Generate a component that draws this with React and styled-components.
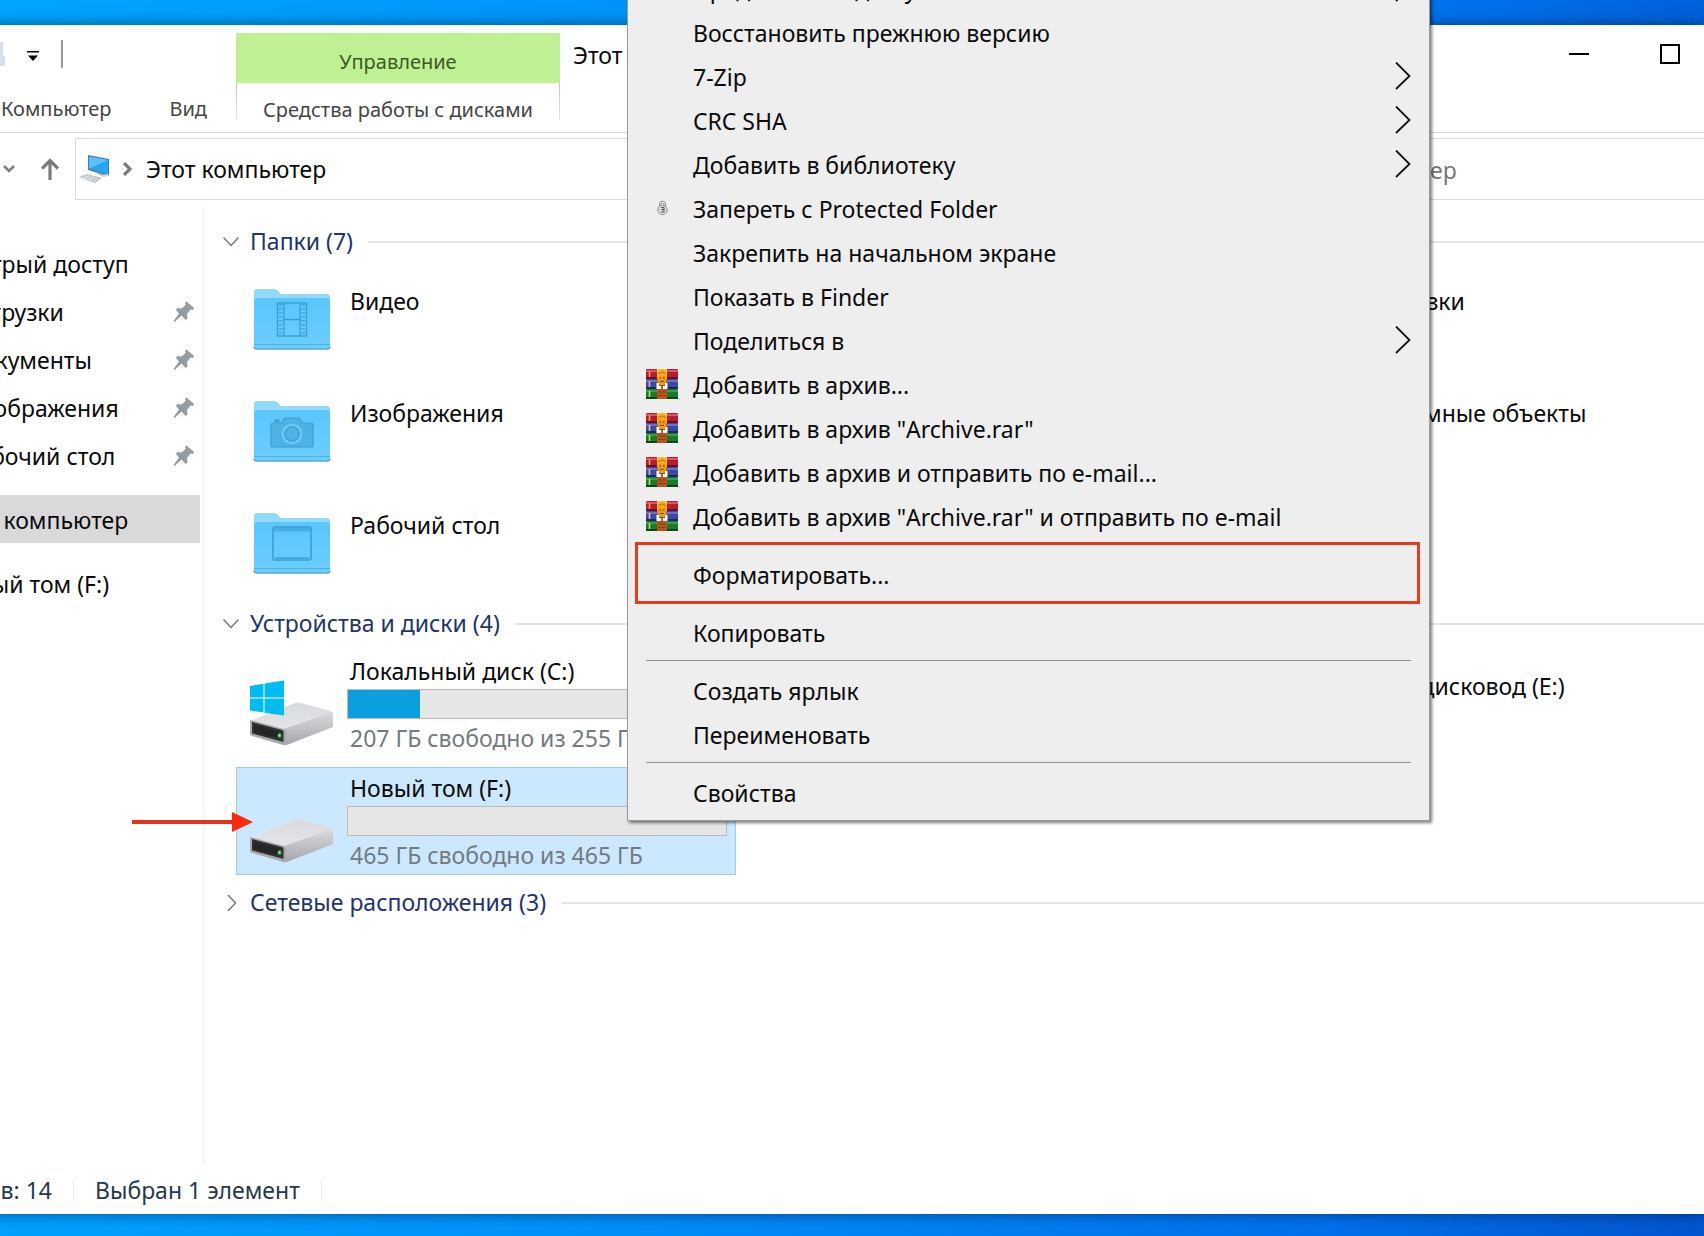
import React from "react";
import styled, { createGlobalStyle, css } from "styled-components";

const GlobalStyle = createGlobalStyle`
  *, *::before, *::after { box-sizing: border-box; }
  body { margin: 0; overflow: hidden; }
  body, button, input { font-family: "Noto Sans", "Open Sans", sans-serif; font-size: 23px; line-height: 30px; color: #0a0a0a; }
  button { margin: 0; padding: 0; border: 0; background: none; text-align: left; }
  a { color: inherit; text-decoration: none; }
  svg { display: block; flex: none; }
  h1, h2, ul { margin: 0; padding: 0; font-size: inherit; font-weight: 400; list-style: none; }
`;

/* ---------- shell ---------- */

const Desktop = styled.div`
  position: relative;
  display: flex;
  min-height: 100vh;
  padding: 25px 0 22px;
  overflow: hidden;
  background: linear-gradient(97deg, #00a6ff 0%, #0092fb 38%, #0070ea 80%, #0056d0 100%);
`;

const Window = styled.div`
  flex: 1;
  min-width: 0;
  display: flex;
  flex-direction: column;
  margin-left: -120px;
  background: #fff;
  box-shadow: 0 0 14px rgba(0, 20, 50, 0.55);
`;

/* ---------- ribbon ---------- */

const Ribbon = styled.header`
  display: flex;
  height: 108px;
  border-bottom: 1px solid #d9d9d9;
`;

const RibbonLeft = styled.div`
  width: 356px;
  display: grid;
  grid-template-rows: 58px 49px;
`;

const QuickAccess = styled.div`
  display: flex;
  align-items: center;
  justify-content: flex-end;
  gap: 22px;
  padding-right: 173px;
`;

const Divider = styled.span`
  width: ${(p) => (p.$faint ? 1 : 2)}px;
  height: ${(p) => (p.$faint ? 22 : 28)}px;
  background: ${(p) => (p.$faint ? "#e8eaec" : "#9a9a9a")};
`;

const Tabs = styled.nav`
  display: flex;
  justify-content: flex-end;
`;

const Tab = styled.button`
  padding: 2px 29px 0;
  font-size: 20px;
  color: #444;
`;

const ContextTab = styled.div`
  width: 324px;
  padding-top: 8px;
  display: grid;
  grid-template-rows: 50px 37px;
`;

const ContextTitle = styled.div`
  padding-top: 14px;
  font-size: 20px;
  text-align: center;
  color: #3d5a26;
  background: #c0f094;
`;

const ContextLabel = styled.button`
  padding-top: 12px;
  font-size: 20px;
  text-align: center;
  white-space: nowrap;
  color: #444;
  border: solid transparent;
  border-width: 0 1px;
  border-image: linear-gradient(#c4c4c4, #e6e6e6) 1;
`;

const Title = styled.h1`
  flex: 1;
  padding: 15px 13px;
`;

const Controls = styled.div`
  display: flex;
  gap: 23px;
`;

const ControlButton = styled.button`
  display: flex;
  align-items: center;
  justify-content: center;
  width: 68px;
  height: 58px;
`;

/* ---------- address row ---------- */

const AddressRow = styled.div`
  display: flex;
  padding: 5px 0 7px;
`;

const History = styled.div`
  width: 195px;
  display: flex;
  align-items: center;
  justify-content: flex-end;
  gap: 26px;
  padding-right: 16px;
`;

const AddressBox = styled.nav`
  flex: 1;
  height: 62px;
  display: flex;
  align-items: center;
  padding: 0 3px;
  border: 1px solid #d9d9d9;
`;

const Crumb = styled.a`
  padding: 0 14px;
`;

const SearchBox = styled.input`
  width: 536px;
  height: 62px;
  margin-left: 20px;
  padding: 2px 27px 0;
  border: solid #d9d9d9;
  border-width: 1px 0 1px 1px;
  outline: 0;
  &::placeholder { color: #767676; opacity: 1; }
`;

/* ---------- body ---------- */

const Body = styled.div`
  flex: 1;
  display: flex;
`;

const Sidebar = styled.nav`
  width: 324px;
  padding: 32px 3px 0 0;
  border-right: 1px solid #eee;
`;

const SideLink = styled.a`
  display: flex;
  align-items: center;
  justify-content: space-between;
  height: 48px;
  margin-bottom: ${(p) => (p.$spaced ? 16 : 0)}px;
  padding: 1px 5px 0 ${(p) => (p.$nested ? 85 : 68)}px;
  background: ${(p) => (p.$active ? "#d9d9d9" : "none")};
`;

const Pane = styled.main`
  flex: 1;
  min-width: 0;
  padding: 19px 0 0 19px;
`;

const GroupHeader = styled.button`
  width: 100%;
  height: 32px;
  display: flex;
  align-items: center;
  color: #22346b;
  white-space: nowrap;
  &::after {
    content: "";
    flex: 1;
    height: 2px;
    margin-left: 15px;
    background: #e3e4e6;
  }
`;

const GroupTitle = styled.h2`
  margin-left: 11px;
  padding-bottom: 2px;
`;

const Grid = styled.ul`
  display: grid;
  grid-template-columns: repeat(3, 500px);
  grid-auto-rows: ${(p) => (p.$drives ? 108 : 112)}px;
  gap: ${(p) => (p.$drives ? 9 : 0)}px 8px;
  padding: ${(p) => (p.$drives ? "10px 0 12px 13px" : "8px 0 6px 13px")};
`;

const Tile = styled.li`
  position: relative;
  grid-row: ${(p) => p.$row};
  grid-column: ${(p) => p.$col};
  display: flex;
  border: 1px solid transparent;
  ${(p) => p.$selected && css`
    background: #cce8ff;
    border-color: #a3cbe8;
  `}
`;

const IconCell = styled.div`
  width: 110px;
  padding: ${(p) => (p.$drive ? "28px 0 0 12px" : "20px 0 0 16px")};
`;

const TileText = styled.div`
  padding-top: ${(p) => (p.$top === "drive" ? 5 : p.$top === "single" ? 20 : 19)}px;
  white-space: nowrap;
`;

const Line = styled.div`
  padding-left: 3px;
  color: ${(p) => (p.$muted ? "#737a80" : "inherit")};
`;

const Usage = styled.div`
  width: 380px;
  height: 30px;
  margin: 3px 0 4px;
  background: #e6e6e6;
  border: 1px solid #bcbcbc;
`;

const UsageFill = styled.div`
  height: 100%;
  background: #0b9fe0;
`;

const Pointer = styled.svg`
  position: absolute;
  left: -105px;
  top: 43px;
`;

const StatusBar = styled.footer`
  display: flex;
  align-items: center;
  gap: 21px;
  height: 49px;
  color: #25384d;
`;

const StatusCount = styled.span`
  width: 172px;
  text-align: right;
`;

/* ---------- context menu ---------- */

const Menu = styled.div`
  position: absolute;
  left: 627px;
  top: -36px;
  width: 803px;
  padding: 2px 0 5px;
  background: #eee;
  border: 1px solid #999;
  box-shadow: 2px 2px 3px rgba(0, 0, 0, 0.5);
`;

const MenuItem = styled.button`
  position: relative;
  display: grid;
  grid-template-columns: 32px 1fr 16px;
  column-gap: 15px;
  align-items: center;
  width: 100%;
  height: 44px;
  padding: 0 18px;
  > svg { margin-bottom: 3px; }
  ${(p) => p.$marked && css`
    z-index: 1;
    &::after {
      content: "";
      position: absolute;
      inset: -11px 9px -7px 7px;
      border: 3px solid #e63c1e;
    }
  `}
`;

const IconSlot = styled.span`
  display: flex;
  justify-content: center;
  padding-bottom: 3px;
`;

const Separator = styled.hr`
  height: 1px;
  margin: 5px 18px 8px;
  border: 0;
  background: #8f8f8f;
`;

/* ---------- drawings ---------- */

const SubmenuArrow = () => (
  <svg width="16" height="28" viewBox="0 0 16 28" fill="none" stroke="#111" strokeWidth="1.8">
    <path d="M1 0.500l13.500 13.500L1 27" />
  </svg>
);

const Pin = () => (
  <svg width="22" height="22" viewBox="0 0 22 22" fill="#929da3">
    <path d="M13.500 0.500l7.500 6.500-1 2-2.500-.5-3.500 4.500.5 4.500-2 1.500-4-4.500L1.500 21 .5 20l5.500-7.500L3 9l1-2 4.500.5L12.500 4l-.5-2.500z" />
  </svg>
);

const Computer = () => (
  <svg width="31" height="28" viewBox="0 0 31 28">
    <path d="M9 0l21 4v17L9 15z" fill="#3f7fae" />
    <path d="M10 1.500l19 3.600v14.200L10 13.800z" fill="#27a4f4" />
    <path d="M10 1.500l19 3.600L10 13.800z" fill="#5dbffa" />
    <path d="M17 18l3-.5 8 2.500-2 2z" fill="#8aa0b2" />
    <path d="M0 22l8-3 15 4-7 5z" fill="#b9bfc6" />
    <path d="M3 22l14 4M6 20.800l13.500 3.800M5 23.500l5-3.500M10 25l5-4" stroke="#e9edf0" strokeWidth=".8" />
    <path d="M22 20.500l7-1.500 1 1.500-6 2z" fill="#d7dde2" />
  </svg>
);

const Folder = ({ kind }) => (
  <svg width="78" height="64" viewBox="0 0 78 64">
    <defs>
      <linearGradient id="folderFront" x1="0" y1="0" x2="0" y2="1">
        <stop offset="0" stopColor="#5ac6fa" />
        <stop offset="1" stopColor="#6ccdff" />
      </linearGradient>
    </defs>
    <path d="M1 5q0-3 3-3h17q2 0 4 2l3 3h46q3 0 3 3v10H1z" fill="#93d9f8" />
    <path d="M1 14q0-3 3-3h70q3 0 3 3v45q0 3-3 3H4q-3 0-3-3z" fill="url(#folderFront)" />
    <path d="M1 57.500h76" stroke="#52b4e6" />
    <path d="M1 59.500q0 2.500 3 2.500h70q3 0 3-2.500" fill="none" stroke="#5fa9d3" strokeWidth="1.500" />
    {kind === "video" && (
      <g fill="none" stroke="#369fd2" strokeWidth="1.300">
        <rect x="24.500" y="16" width="29" height="33" />
        <path d="M31 16v33M47 16v33M31 32.500h16" />
        <path d="M27.700 17v31M50.300 17v31" strokeWidth="4" strokeDasharray="1.500 2.500" opacity=".7" />
      </g>
    )}
    {kind === "image" && (
      <g fill="#4db2e4" stroke="#3a9fd2" strokeWidth="1.200">
        <path d="M20 24h9l3-5h14l3 5h9q2 0 2 2v20q0 2-2 2H20q-2 0-2-2V26q0-2 2-2z" />
        <rect x="22" y="21" width="4" height="1.500" />
        <circle cx="39" cy="35" r="9.500" fill="#58bdf0" stroke="#7fd2fb" />
        <circle cx="39" cy="35" r="7" />
        <circle cx="53" cy="28" r="1.500" fill="#8bd8fc" />
      </g>
    )}
    {kind === "desktop" && (
      <g fill="none" stroke="#3a9fd4" strokeWidth="1.600">
        <rect x="20" y="16" width="38" height="33" rx="2" />
        <path d="M20 18.500h38" strokeWidth="4" opacity=".6" />
        <path d="M22 47h34" />
      </g>
    )}
  </svg>
);

const Drive = ({ system }) => (
  <svg width="86" height="70" viewBox="0 0 86 70">
    <defs>
      <linearGradient id="driveTop" x1="0" y1="0" x2="0" y2="1">
        <stop offset="0" stopColor="#d9dadd" />
        <stop offset="1" stopColor="#e6e6e9" />
      </linearGradient>
      <linearGradient id="driveSide" x1="0" y1="0" x2="0" y2="1">
        <stop offset="0" stopColor="#dadbdd" />
        <stop offset="1" stopColor="#a4a6a9" />
      </linearGradient>
    </defs>
    <path d="M1 42L46 24q3-1 6 0l30 8 2 3L36 52z" fill="url(#driveTop)" />
    <path d="M35 50L84 33v15L39 65.500q-2 1-4 .5z" fill="url(#driveSide)" />
    <path d="M1 41l34 9q2 1 2 3v11q0 3-3 2L3 57q-2-.5-2-2z" fill="#a7a9ab" />
    <path d="M3 43l30 8q1.500.5 1.500 2V63L3 54.500z" fill="#303133" />
    <path d="M5 46l27 7v7L5 53z" fill="#242526" />
    <ellipse cx="30.500" cy="56.500" rx="2" ry="2.600" fill="#37a74a" />
    <circle cx="30.500" cy="56.500" r="1" fill="#b8f5c0" />
    {system && (
      <g fill="#00bcf2">
        <path d="M1 7l13.500-2.200V18.500H1zM15.500 4.600L35 1.500v17H15.500zM1 19.500h13.500v14L1 31.500zM15.500 19.500H35v17l-19.500-2.800z" />
      </g>
    )}
  </svg>
);

const Winrar = () => (
  <svg width="32" height="30" viewBox="0 0 32 30">
    <rect y="0" width="32" height="10" rx="1" fill="#b81c30" />
    <rect y="1" width="32" height="2" fill="#dc5262" />
    <rect y="8" width="32" height="2" fill="#6d0d1e" />
    <rect y="10" width="32" height="10" rx="1" fill="#3a4aa4" />
    <rect y="11" width="32" height="2" fill="#6474c6" />
    <rect y="18" width="32" height="2" fill="#1d2762" />
    <rect y="20" width="32" height="10" rx="1" fill="#187a2a" />
    <rect y="21" width="32" height="2" fill="#33a146" />
    <rect y="28" width="32" height="2" fill="#0c4617" />
    <path d="M3.500 2v6" stroke="#f2a33c" strokeWidth="1.600" />
    <path d="M3.500 12v6" stroke="#e6b9a0" strokeWidth="1.600" />
    <path d="M3.500 22v6" stroke="#c5e04a" strokeWidth="1.600" />
    <path d="M11 0h10v10H11z" fill="#f0cf45" />
    <path d="M11 10h10v10H11z" fill="#8a4a1c" />
    <path d="M11.500 6q0-5.500 4.500-5.500T20.500 6v1h-9z" fill="#f6a91c" />
    <path d="M12 4.500q4-3 8 0" stroke="#c97708" fill="none" />
    <path d="M11.500 7h9v6q-1 3.500-4.500 3.500T11.500 13z" fill="#f09a12" />
    <path d="M13.500 9h1.500M17 9h1.500M14 12.500h4" stroke="#7c3d08" />
    <path d="M10.500 14h2.500v3h6v-3h2.500v6h-11z" fill="#fff" />
    <path d="M16 16v4" stroke="#6e3a1c" strokeWidth="1.500" />
    <rect x="11" y="20" width="10" height="10" fill="#b9541a" />
    <path d="M12 23h8M12 26.500h8" stroke="#8e3b10" />
  </svg>
);

const Lock = () => (
  <svg width="11" height="16" viewBox="0 0 11 16" fill="none" stroke="#888" strokeWidth=".9">
    <path d="M2.500 6V4a3 3 0 016 0v2" />
    <path d="M4 6V4.500a1.500 1.500 0 013 0V6" />
    <circle cx="5.500" cy="10" r="4.700" fill="#ddd" />
    <path d="M4 7.500h3v2H4.500h2.500v2.500H4" stroke="#444" />
  </svg>
);

const GroupChevron = ({ open }) => (
  <svg width="16" height="16" viewBox="0 0 16 16" fill="none" stroke="#777" strokeWidth="1.500">
    <path d={open ? "M0.500 3.500L8 11.500l7.500-8" : "M5 0l7.500 8L5 16"} />
  </svg>
);

/* ---------- data ---------- */

const sideLinks = [
  { text: "Быстрый доступ" },
  { text: "Загрузки", nested: true, pinned: true },
  { text: "Документы", nested: true, pinned: true },
  { text: "Изображения", nested: true, pinned: true },
  { text: "Рабочий стол", nested: true, pinned: true, spaced: true },
  { text: "Этот компьютер", active: true, spaced: true },
  { text: "Новый том (F:)" },
];

const folders = [
  { name: "Видео", kind: "video", row: 1, col: 1 },
  { name: "Изображения", kind: "image", row: 2, col: 1 },
  { name: "Рабочий стол", kind: "desktop", row: 3, col: 1 },
  { name: "Загрузки", row: 1, col: 3 },
  { name: "Объемные объекты", row: 2, col: 3 },
];

const drives = [
  { name: "Локальный диск (C:)", free: "207 ГБ свободно из 255 ГБ", used: 19, system: true, row: 1, col: 1 },
  { name: "Новый том (F:)", free: "465 ГБ свободно из 465 ГБ", used: 0, selected: true, row: 2, col: 1 },
  { name: "DVD-дисковод (E:)", row: 1, col: 3 },
];

const menu = [
  { text: "Предоставить доступ к", sub: true },
  { text: "Восстановить прежнюю версию" },
  { text: "7-Zip", sub: true },
  { text: "CRC SHA", sub: true },
  { text: "Добавить в библиотеку", sub: true },
  { text: "Запереть с Protected Folder", icon: <Lock /> },
  { text: "Закрепить на начальном экране" },
  { text: "Показать в Finder" },
  { text: "Поделиться в", sub: true },
  { text: "Добавить в архив...", icon: <Winrar /> },
  { text: 'Добавить в архив "Archive.rar"', icon: <Winrar /> },
  { text: "Добавить в архив и отправить по e-mail...", icon: <Winrar /> },
  { text: 'Добавить в архив "Archive.rar" и отправить по e-mail', icon: <Winrar /> },
  null,
  { text: "Форматировать...", marked: true },
  null,
  { text: "Копировать" },
  null,
  { text: "Создать ярлык" },
  { text: "Переименовать" },
  null,
  { text: "Свойства" },
];

function Header() {
  return (
    <>
      <Ribbon>
        <RibbonLeft>
          <QuickAccess>
            <svg width="24" height="24" viewBox="0 0 24 24" fill="#d5dff0">
              <path d="M0 0h22v14h2v10H0z" />
            </svg>
            <svg width="12" height="14" viewBox="0 0 12 14">
              <path d="M0 4h12v1.500H0zM1 8.500h10L6 14z" fill="#000" />
            </svg>
            <Divider />
          </QuickAccess>
          <Tabs>
            <Tab>Компьютер</Tab>
            <Tab>Вид</Tab>
          </Tabs>
        </RibbonLeft>
        <ContextTab>
          <ContextTitle>Управление</ContextTitle>
          <ContextLabel>Средства работы с дисками</ContextLabel>
        </ContextTab>
        <Title>Этот</Title>
        <Controls>
          <ControlButton aria-label="Свернуть">
            <svg width="20" height="20" viewBox="0 0 20 20"><path d="M0 9h20v2H0z" /></svg>
          </ControlButton>
          <ControlButton aria-label="Развернуть">
            <svg width="20" height="20" viewBox="0 0 20 20" fill="none" stroke="#000" strokeWidth="2"><path d="M1 1h18v18H1z" /></svg>
          </ControlButton>
        </Controls>
      </Ribbon>
      <AddressRow>
        <History>
          <svg width="12" height="8" viewBox="0 0 12 8" fill="none" stroke="#808080" strokeWidth="2.600">
            <path d="M1 1l5 5 5-5" />
          </svg>
          <svg width="18" height="22" viewBox="0 0 18 22" fill="none" stroke="#7b7b7b" strokeWidth="3.200">
            <path d="M9 22V2.500M1 10.500l8-8 8 8" />
          </svg>
        </History>
        <AddressBox>
          <Computer />
          <svg width="22" height="14" viewBox="0 0 22 14" fill="none" stroke="#7b7b7b" strokeWidth="3.200">
            <path d="M14 1l6 6-6 6" />
          </svg>
          <Crumb href="#pc">Этот компьютер</Crumb>
        </AddressBox>
        <SearchBox aria-label="Поиск" placeholder="Поиск: Этот компьютер" />
      </AddressRow>
    </>
  );
}

function Content() {
  return (
    <Pane>
      <GroupHeader><GroupChevron open /><GroupTitle>Папки (7)</GroupTitle></GroupHeader>
      <Grid>
        {folders.map((f) => (
          <Tile key={f.name} $row={f.row} $col={f.col}>
            <IconCell><Folder kind={f.kind} /></IconCell>
            <TileText><Line>{f.name}</Line></TileText>
          </Tile>
        ))}
      </Grid>
      <GroupHeader><GroupChevron open /><GroupTitle>Устройства и диски (4)</GroupTitle></GroupHeader>
      <Grid $drives>
        {drives.map((d) => (
          <Tile key={d.name} $row={d.row} $col={d.col} $selected={d.selected}>
            <IconCell $drive><Drive system={d.system} /></IconCell>
            <TileText $top={d.free ? "drive" : "single"}>
              <Line>{d.name}</Line>
              {d.free && <Usage><UsageFill style={{ width: `${d.used}%` }} /></Usage>}
              {d.free && <Line $muted>{d.free}</Line>}
            </TileText>
            {d.selected && (
              <Pointer width="121" height="22" viewBox="0 0 121 22" fill="#fa2a0a">
                <path d="M0 9h100v4H0z" fill="#e5341b" />
                <path d="M100 1l21 10-21 10z" />
              </Pointer>
            )}
          </Tile>
        ))}
      </Grid>
      <GroupHeader><GroupChevron /><GroupTitle>Сетевые расположения (3)</GroupTitle></GroupHeader>
    </Pane>
  );
}

export default function App() {
  return (
    <Desktop>
      <GlobalStyle />
      <Window>
        <Header />
        <Body>
          <Sidebar>
            {sideLinks.map((s) => (
              <SideLink key={s.text} href="#nav" $nested={s.nested} $active={s.active} $spaced={s.spaced}>
                {s.text}
                {s.pinned && <Pin />}
              </SideLink>
            ))}
          </Sidebar>
          <Content />
        </Body>
        <StatusBar>
          <StatusCount>Элементов: 14</StatusCount>
          <Divider $faint />
          <span>Выбран 1 элемент</span>
          <Divider $faint />
        </StatusBar>
      </Window>
      <Menu role="menu">
        {menu.map((m, i) =>
          m ? (
            <MenuItem key={i} role="menuitem" $marked={m.marked}>
              <IconSlot>{m.icon}</IconSlot>
              <span>{m.text}</span>
              {m.sub && <SubmenuArrow />}
            </MenuItem>
          ) : (
            <Separator key={i} />
          )
        )}
      </Menu>
    </Desktop>
  );
}
